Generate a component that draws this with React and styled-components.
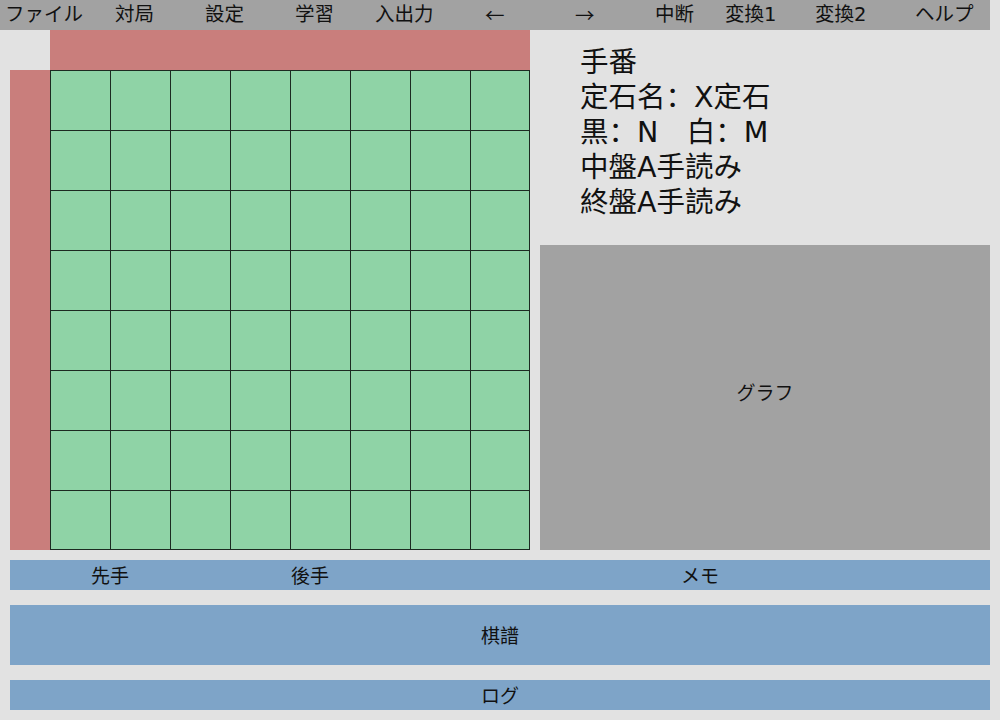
import React from "react";
import styled, { createGlobalStyle } from "styled-components";

const GlobalStyle = createGlobalStyle`
  html, body {
    margin: 0;
    padding: 0;
    background: #e2e2e2;
  }
  body {
    font-family: "DejaVu Sans", "Noto Sans CJK SC", sans-serif;
    color: #111;
  }
`;

const Page = styled.div`
  width: 1000px;
  height: 720px;
  background: #e2e2e2;
  overflow: hidden;
`;

const MenuBar = styled.nav`
  display: flex;
  width: 990px;
  height: 30px;
  padding-left: 5px;
  box-sizing: border-box;
  background: #a2a2a2;
`;

const MenuItem = styled.div`
  flex: 0 0 ${(p) => p.$w}px;
  height: 30px;
  line-height: 30px;
  font-size: 19.5px;
  white-space: nowrap;
  color: #111;
  font-family: ${(p) =>
    p.$cjk ? `"Noto Sans CJK SC", sans-serif` : `"DejaVu Sans", "Noto Sans CJK SC", sans-serif`};
`;

const Main = styled.div`
  display: flex;
  height: 520px;
  padding-left: 10px;
`;

const BoardArea = styled.div`
  display: grid;
  grid-template-columns: 40px 480px;
  grid-template-rows: 40px 480px;
`;

const Corner = styled.div`
  background: #e2e2e2;
`;

const Bar = styled.div`
  background: #c97e7c;
`;

const Board = styled.div`
  display: grid;
  grid-template-columns: repeat(8, 60px);
  grid-template-rows: repeat(8, 60px);
  background: #8fd3a6;
`;

const Cell = styled.div`
  box-sizing: border-box;
  border-left: 1px solid #1c2a21;
  border-top: 1px solid #1c2a21;
  &:nth-child(8n) {
    border-right: 1px solid #1c2a21;
  }
  &:nth-child(n + 57) {
    border-bottom: 1px solid #1c2a21;
  }
`;

const Side = styled.div`
  display: flex;
  flex-direction: column;
  width: 450px;
  margin-left: 10px;
`;

const Info = styled.div`
  height: 215px;
  box-sizing: border-box;
  padding: 15px 0 0 40px;
  font-size: 28.5px;
  line-height: 35px;
  color: #111;
`;

const InfoLine = styled.div`
  white-space: pre;
`;

const Graph = styled.div`
  flex: 1;
  display: flex;
  align-items: center;
  justify-content: center;
  padding-bottom: 13px;
  box-sizing: border-box;
  background: #a2a2a2;
  font-size: 19px;
`;

const Bottom = styled.div`
  display: flex;
  flex-direction: column;
  gap: 15px;
  padding: 10px 10px 0;
`;

const Strip = styled.div`
  display: flex;
  height: ${(p) => p.$h}px;
  background: #7ea4c8;
  font-size: 19px;
`;

const StripCell = styled.div`
  flex: ${(p) => (p.$w ? `0 0 ${p.$w}px` : "1")};
  display: flex;
  align-items: center;
  justify-content: center;
  padding-bottom: 1px;
`;

const menu = [
  ["ファイル", 110],
  ["対局", 90],
  ["設定", 90],
  ["学習", 80],
  ["入出力", 110],
  ["←", 90, true],
  ["→", 80, true],
  ["中断", 70],
  ["変換1", 90],
  ["変換2", 100],
  ["ヘルプ", 75],
];

export default function App() {
  return (
    <Page>
      <GlobalStyle />
      <MenuBar>
        {menu.map(([label, w, cjk]) => (
          <MenuItem key={label} $w={w} $cjk={cjk}>
            {label}
          </MenuItem>
        ))}
      </MenuBar>
      <Main>
        <BoardArea>
          <Corner />
          <Bar />
          <Bar />
          <Board>
            {Array.from({ length: 64 }, (_, i) => (
              <Cell key={i} />
            ))}
          </Board>
        </BoardArea>
        <Side>
          <Info>
            <InfoLine>手番</InfoLine>
            <InfoLine>定石名：X定石</InfoLine>
            <InfoLine>黒：N　白：M</InfoLine>
            <InfoLine>中盤A手読み</InfoLine>
            <InfoLine>終盤A手読み</InfoLine>
          </Info>
          <Graph>グラフ</Graph>
        </Side>
      </Main>
      <Bottom>
        <Strip $h={30}>
          <StripCell $w={200}>先手</StripCell>
          <StripCell $w={200}>後手</StripCell>
          <StripCell>メモ</StripCell>
        </Strip>
        <Strip $h={60}>
          <StripCell>棋譜</StripCell>
        </Strip>
        <Strip $h={30}>
          <StripCell>ログ</StripCell>
        </Strip>
      </Bottom>
    </Page>
  );
}
